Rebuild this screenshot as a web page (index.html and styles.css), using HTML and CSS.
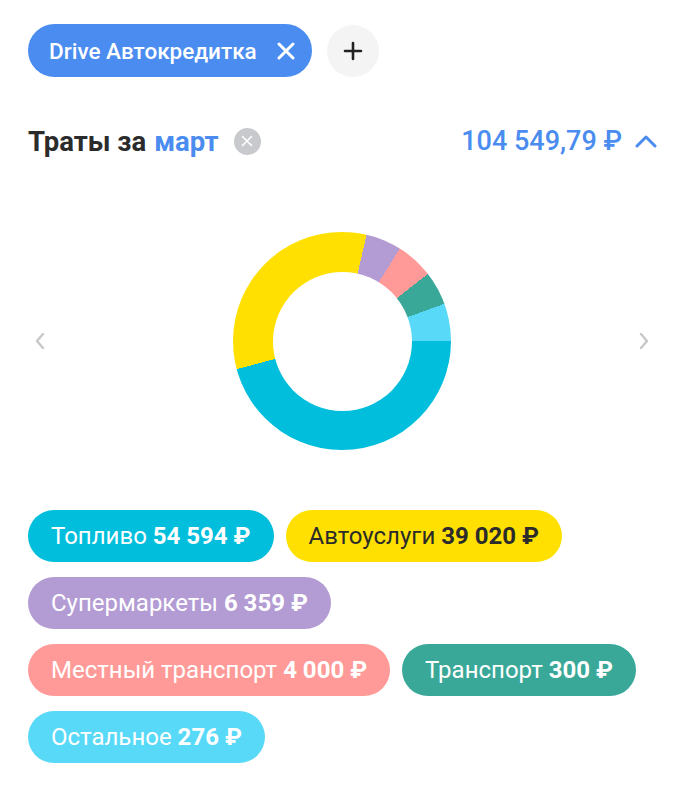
FILE: index.html
```html
<!DOCTYPE html>
<html lang="ru">
<head>
  <meta charset="UTF-8">
  <title>Траты за март</title>
  <link rel="stylesheet" href="styles.css">
</head>
<body>
  <div class="filters">
    <div class="chip">
      <span>Drive Автокредитка</span>
      <svg class="chip-close" width="18" height="18" viewBox="0 0 18 18">
        <path d="M2 2 L16 16 M16 2 L2 16" stroke="#fff" stroke-width="3" stroke-linecap="round"/>
      </svg>
    </div>
    <div class="add-btn">
      <svg width="20" height="20" viewBox="0 0 20 20">
        <path d="M10 2 V18 M2 10 H18" stroke="#222" stroke-width="2.6" stroke-linecap="round"/>
      </svg>
    </div>
  </div>

  <div class="header">
    <div class="title">
      Траты за <span class="month">март</span>
      <span class="clear">
        <svg width="12" height="12" viewBox="0 0 12 12">
          <path d="M1.5 1.5 L10.5 10.5 M10.5 1.5 L1.5 10.5" stroke="#fff" stroke-width="1.6" stroke-linecap="round"/>
        </svg>
      </span>
    </div>
    <div class="total">
      104 549,79 ₽
      <svg width="22" height="14" viewBox="0 0 22 14">
        <path d="M2 12 L11 3 L20 12" fill="none" stroke="#4a8cf0" stroke-width="3" stroke-linecap="round" stroke-linejoin="round"/>
      </svg>
    </div>
  </div>

  <div class="chart">
    <svg class="arrow" width="10" height="16" viewBox="0 0 10 16">
      <path d="M8 1 L2 8 L8 15" fill="none" stroke="#c8c8c8" stroke-width="2.4" stroke-linecap="round" stroke-linejoin="round"/>
    </svg>
    <div class="donut">
      <div class="donut-hole"></div>
    </div>
    <svg class="arrow" width="10" height="16" viewBox="0 0 10 16">
      <path d="M2 1 L8 8 L2 15" fill="none" stroke="#c8c8c8" stroke-width="2.4" stroke-linecap="round" stroke-linejoin="round"/>
    </svg>
  </div>

  <div class="categories">
    <div class="pill fuel">Топливо <b>54 594 ₽</b></div>
    <div class="pill auto">Автоуслуги <b>39 020 ₽</b></div>
    <div class="pill market">Супермаркеты <b>6 359 ₽</b></div>
    <div class="pill local">Местный транспорт <b>4 000 ₽</b></div>
    <div class="pill transport">Транспорт <b>300 ₽</b></div>
    <div class="pill other">Остальное <b>276 ₽</b></div>
  </div>
</body>
</html>
```

FILE: styles.css
```css
:root {
  --blue: #4a8cf0;
  --text: #2b2b2b;
  --fuel: #00bedc;
  --auto: #ffe000;
  --market: #b39bd4;
  --local: #ff9a98;
  --transport: #3aa898;
  --other: #58d9f8;
}

body {
  font-family: Roboto, "Noto Sans", sans-serif;
  background-color: #fff;
  color: var(--text);
  margin: 0;
  padding: 24px 28px 0;
}

.filters {
  display: flex;
  align-items: center;
  gap: 15px;
}

.chip {
  display: flex;
  align-items: center;
  gap: 20px;
  height: 53px;
  padding: 0 17px 0 21px;
  border-radius: 27px;
  background-color: var(--blue);
  color: #fff;
  font-size: 22.5px;
  font-weight: 500;
}

.add-btn {
  width: 52px;
  height: 52px;
  border-radius: 50%;
  background-color: #f4f4f4;
  display: flex;
  align-items: center;
  justify-content: center;
}

.header {
  display: flex;
  justify-content: space-between;
  align-items: center;
  margin-top: 47px;
  height: 34px;
}

.title {
  display: flex;
  align-items: center;
  font-size: 27.5px;
  font-weight: 700;
}

.month {
  color: var(--blue);
  margin-left: 8px;
}

.clear {
  width: 27px;
  height: 27px;
  border-radius: 50%;
  background-color: #c8c9cc;
  margin-left: 15px;
  display: flex;
  align-items: center;
  justify-content: center;
}

.total {
  display: flex;
  align-items: center;
  gap: 13px;
  color: var(--blue);
  font-size: 27px;
  font-weight: 500;
}

.chart {
  display: flex;
  align-items: center;
  justify-content: space-between;
  padding: 74px 8px 60px 7px;
}

.donut {
  width: 218px;
  height: 218px;
  border-radius: 50%;
  background: conic-gradient(from 90deg,
    var(--fuel) 0deg 165deg,
    var(--auto) 165deg 283deg,
    var(--market) 283deg 302deg,
    var(--local) 302deg 322deg,
    var(--transport) 322deg 340deg,
    var(--other) 340deg 360deg);
  display: flex;
  align-items: center;
  justify-content: center;
}

.donut-hole {
  width: 139px;
  height: 139px;
  border-radius: 50%;
  background-color: #fff;
}

.categories {
  display: flex;
  flex-wrap: wrap;
  gap: 15px 12px;
  max-width: 620px;
}

.pill {
  height: 52px;
  line-height: 52px;
  padding: 0 23px;
  border-radius: 26px;
  font-size: 24px;
  color: #fff;
  white-space: nowrap;
}

.pill b {
  font-weight: 700;
}

.fuel { background-color: var(--fuel); }
.auto { background-color: var(--auto); color: var(--text); }
.market { background-color: var(--market); }
.local { background-color: var(--local); }
.transport { background-color: var(--transport); }
.other { background-color: var(--other); }
```
